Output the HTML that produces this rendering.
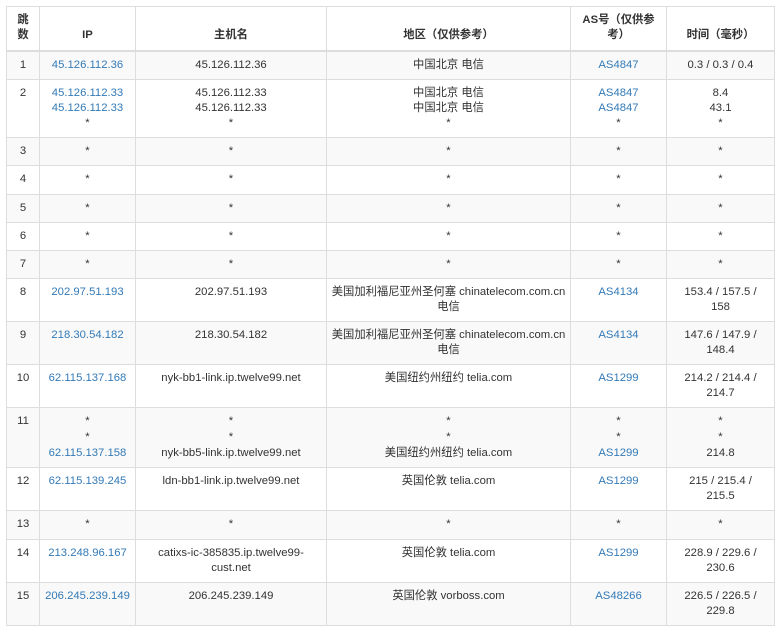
<!DOCTYPE html>
<html><head><meta charset="utf-8"><style>
body{margin:0;background:#fff;font-family:"Liberation Sans","Noto Sans CJK SC",sans-serif;font-size:11.3px;color:#333}
table{position:absolute;left:6px;top:6px;border-collapse:collapse;table-layout:fixed;width:768px}
td,th{border:1px solid #ddd;padding:6px 2px;line-height:15px;height:15px;text-align:center;vertical-align:top;white-space:nowrap;overflow:hidden}
th{vertical-align:bottom;font-weight:bold;border-bottom:2px solid #ddd;padding-bottom:7px}
tbody tr:nth-child(odd){background:#f9f9f9}
a{color:#337ab7;text-decoration:none}
.t td{line-height:15px;height:30px}
.u td{line-height:15.6px;height:47px}
.s td{height:15.3px}
</style></head><body>
<table>
<colgroup><col style="width:33px"><col style="width:96px"><col style="width:191px"><col style="width:244px"><col style="width:96px"><col style="width:108px"></colgroup>
<thead><tr><th>跳<br>数</th><th>IP</th><th>主机名</th><th>地区（仅供参考）</th><th>AS号（仅供参<br>考）</th><th>时间（毫秒）</th></tr></thead>
<tbody>
<tr><td>1</td><td><a>45.126.112.36</a></td><td>45.126.112.36</td><td>中国北京 电信</td><td><a>AS4847</a></td><td>0.3 / 0.3 / 0.4</td></tr>
<tr><td>2</td><td><a>45.126.112.33</a><br><a>45.126.112.33</a><br>*</td><td>45.126.112.33<br>45.126.112.33<br>*</td><td>中国北京 电信<br>中国北京 电信<br>*</td><td><a>AS4847</a><br><a>AS4847</a><br>*</td><td>8.4<br>43.1<br>*</td></tr>
<tr class="s"><td>3</td><td>*</td><td>*</td><td>*</td><td>*</td><td>*</td></tr>
<tr class="s"><td>4</td><td>*</td><td>*</td><td>*</td><td>*</td><td>*</td></tr>
<tr class="s"><td>5</td><td>*</td><td>*</td><td>*</td><td>*</td><td>*</td></tr>
<tr class="s"><td>6</td><td>*</td><td>*</td><td>*</td><td>*</td><td>*</td></tr>
<tr class="s"><td>7</td><td>*</td><td>*</td><td>*</td><td>*</td><td>*</td></tr>
<tr class="t"><td>8</td><td><a>202.97.51.193</a></td><td>202.97.51.193</td><td>美国加利福尼亚州圣何塞 chinatelecom.com.cn<br>电信</td><td><a>AS4134</a></td><td>153.4 / 157.5 /<br>158</td></tr>
<tr class="t"><td>9</td><td><a>218.30.54.182</a></td><td>218.30.54.182</td><td>美国加利福尼亚州圣何塞 chinatelecom.com.cn<br>电信</td><td><a>AS4134</a></td><td>147.6 / 147.9 /<br>148.4</td></tr>
<tr class="t"><td>10</td><td><a>62.115.137.168</a></td><td>nyk-bb1-link.ip.twelve99.net</td><td>美国纽约州纽约 telia.com</td><td><a>AS1299</a></td><td>214.2 / 214.4 /<br>214.7</td></tr>
<tr class="u"><td>11</td><td>*<br>*<br><a>62.115.137.158</a></td><td>*<br>*<br>nyk-bb5-link.ip.twelve99.net</td><td>*<br>*<br>美国纽约州纽约 telia.com</td><td>*<br>*<br><a>AS1299</a></td><td>*<br>*<br>214.8</td></tr>
<tr class="t"><td>12</td><td><a>62.115.139.245</a></td><td>ldn-bb1-link.ip.twelve99.net</td><td>英国伦敦 telia.com</td><td><a>AS1299</a></td><td>215 / 215.4 /<br>215.5</td></tr>
<tr class="s"><td>13</td><td>*</td><td>*</td><td>*</td><td>*</td><td>*</td></tr>
<tr class="t"><td>14</td><td><a>213.248.96.167</a></td><td>catixs-ic-385835.ip.twelve99-<br>cust.net</td><td>英国伦敦 telia.com</td><td><a>AS1299</a></td><td>228.9 / 229.6 /<br>230.6</td></tr>
<tr class="t"><td>15</td><td><a>206.245.239.149</a></td><td>206.245.239.149</td><td>英国伦敦 vorboss.com</td><td><a>AS48266</a></td><td>226.5 / 226.5 /<br>229.8</td></tr>
</tbody></table>
</body></html>
